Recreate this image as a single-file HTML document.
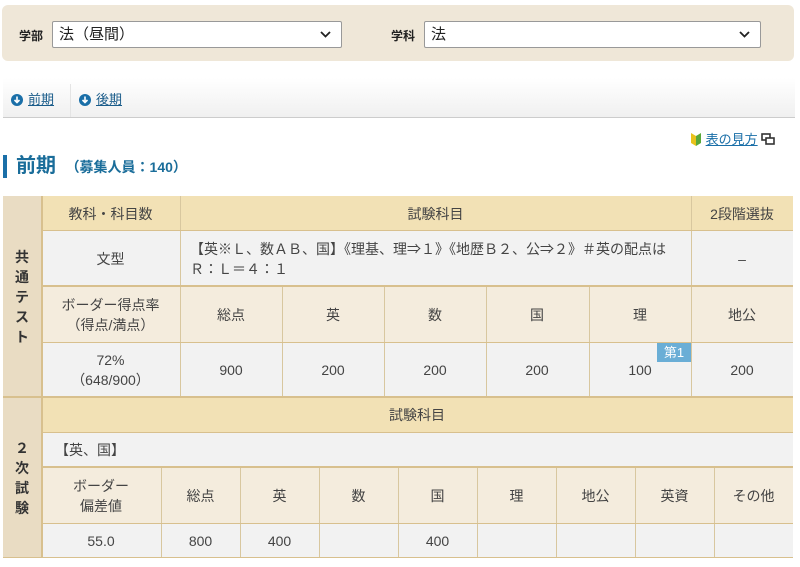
<!DOCTYPE html>
<html><head><meta charset="utf-8"><style>
body{margin:0;width:800px;height:567px;background:#fff;font-family:"Liberation Sans","Noto Sans CJK JP",sans-serif;color:#444;position:relative;overflow:hidden}
.a{position:absolute}
.c{position:absolute;display:flex;align-items:center;justify-content:center;text-align:center;font-size:14px;line-height:20px;box-sizing:border-box;color:#444}
.y{background:#f2e1b5}
.l{background:#f4ecdd}
.d{background:#f2f2f2}
.sel{position:absolute;background:#fff;border:1px solid #999;border-radius:2px;height:27px;box-sizing:border-box;font-size:15px;line-height:25px;padding-left:6px;color:#222}
.sel svg{position:absolute;right:10px;top:9px}
.lab{position:absolute;font-size:12px;font-weight:bold;color:#222}
.vl{position:absolute;width:1px;background:#d8c79f}
.hl{position:absolute;height:2px;background:#d8c08e}
.ic{display:inline-block;width:12px;height:12px;border-radius:50%;background:#1a6fa8;vertical-align:-2px;margin-right:5px;position:relative}
a{color:#1a5c8a}
</style></head><body>
<div class="a" style="left:2px;top:5px;width:792px;height:56px;background:#efe7d8;border-radius:6px"></div>
<div class="lab" style="left:19px;top:27px">学部</div>
<div class="sel" style="left:52px;top:21px;width:290px">法（昼間）<svg width="11" height="7" viewBox="0 0 11 7"><path d="M1 1l4.5 4.5L10 1" stroke="#222" stroke-width="1.8" fill="none"/></svg></div>
<div class="lab" style="left:391px;top:27px">学科</div>
<div class="sel" style="left:424px;top:21px;width:337px">法<svg width="11" height="7" viewBox="0 0 11 7"><path d="M1 1l4.5 4.5L10 1" stroke="#222" stroke-width="1.8" fill="none"/></svg></div>

<div class="a" style="left:3px;top:78px;width:792px;height:39px;background:linear-gradient(#fff,#f0f0f0);border-bottom:1px solid #ccc"></div>
<div class="a" style="left:70px;top:84px;width:1px;height:33px;background:#e4e4e4"></div>
<div class="a" style="left:11px;top:89px;font-size:13px"><span class="ic"><svg class="a" style="left:2px;top:2px" width="8" height="8" viewBox="0 0 8 8"><path d="M4 0.5v6M1.5 4L4 6.5 6.5 4" stroke="#fff" stroke-width="1.6" fill="none"/></svg></span><a style="text-decoration:underline">前期</a></div>
<div class="a" style="left:79px;top:89px;font-size:13px"><span class="ic"><svg class="a" style="left:2px;top:2px" width="8" height="8" viewBox="0 0 8 8"><path d="M4 0.5v6M1.5 4L4 6.5 6.5 4" stroke="#fff" stroke-width="1.6" fill="none"/></svg></span><a style="text-decoration:underline">後期</a></div>

<div class="a" style="left:690px;top:129px;font-size:13px"><svg width="12" height="16" viewBox="0 0 12 16" style="vertical-align:-3px"><path d="M1 2l5 3v10l-5-3z" fill="#e8c21c"/><path d="M6 5l5-3v10l-5 3z" fill="#5aa83a"/></svg> <a style="text-decoration:underline;color:#1a6fa8">表の見方</a> <svg width="14" height="12" viewBox="0 0 14 12" style="vertical-align:-1px"><rect x="1" y="1" width="8" height="6" fill="none" stroke="#333" stroke-width="1.6"/><rect x="5" y="5" width="8" height="6" fill="#fff" stroke="#333" stroke-width="1.6"/></svg></div>

<div class="a" style="left:3px;top:155px;width:4px;height:23px;background:#1a6fa8"></div>
<div class="a" style="left:16px;top:149px;font-size:20px;font-weight:bold;color:#1a6d9a">前期 <span style="font-size:14px;margin-left:4px">（募集人員：140）</span></div>

<!-- section 1 -->
<div class="c" style="left:3px;top:196px;width:38px;height:201px;background:#e9dcc3;font-weight:bold;line-height:20px;color:#333">共<br>通<br>テ<br>ス<br>ト</div>
<div class="c y" style="left:41px;top:196px;width:139px;height:35px">教科・科目数</div>
<div class="c y" style="left:180px;top:196px;width:511px;height:35px">試験科目</div>
<div class="c y" style="left:691px;top:196px;width:102px;height:35px">2段階選抜</div>
<div class="c d" style="left:41px;top:231px;width:139px;height:55px">文型</div>
<div class="c d" style="left:180px;top:231px;width:511px;height:55px;justify-content:flex-start;text-align:left;padding:0 4px 0 10px">【英※Ｌ、数ＡＢ、国】《理基、理⇒１》《地歴Ｂ２、公⇒２》＃英の配点は<br>Ｒ：Ｌ＝４：１</div>
<div class="c d" style="left:691px;top:231px;width:102px;height:55px">–</div>
<div class="c l" style="left:41px;top:286px;width:752px;height:57px"></div>
<div class="c l" style="left:41px;top:286px;width:139px;height:57px">ボーダー得点率<br>（得点/満点）</div>
<div class="c" style="left:180px;top:286px;width:102px;height:57px">総点</div>
<div class="c" style="left:282px;top:286px;width:102px;height:57px">英</div>
<div class="c" style="left:384px;top:286px;width:102px;height:57px">数</div>
<div class="c" style="left:486px;top:286px;width:102px;height:57px">国</div>
<div class="c" style="left:589px;top:286px;width:102px;height:57px">理</div>
<div class="c" style="left:691px;top:286px;width:102px;height:57px">地公</div>
<div class="c d" style="left:41px;top:343px;width:752px;height:54px"></div>
<div class="c" style="left:41px;top:343px;width:139px;height:54px">72%<br>（648/900）</div>
<div class="c" style="left:180px;top:343px;width:102px;height:54px">900</div>
<div class="c" style="left:282px;top:343px;width:102px;height:54px">200</div>
<div class="c" style="left:384px;top:343px;width:102px;height:54px">200</div>
<div class="c" style="left:486px;top:343px;width:102px;height:54px">200</div>
<div class="c" style="left:589px;top:343px;width:102px;height:54px">100</div>
<div class="c" style="left:691px;top:343px;width:102px;height:54px">200</div>
<div class="c" style="left:657px;top:343px;width:34px;height:19px;background:#6aaed6;color:#fff;font-size:13px">第1</div>
<div class="vl" style="left:180px;top:196px;height:201px"></div>
<div class="vl" style="left:691px;top:196px;height:201px"></div>
<div class="vl" style="left:282px;top:286px;height:111px"></div>
<div class="vl" style="left:384px;top:286px;height:111px"></div>
<div class="vl" style="left:486px;top:286px;height:111px"></div>
<div class="vl" style="left:589px;top:286px;height:111px"></div>
<div class="hl" style="left:41px;top:230px;width:752px;height:1px"></div>
<div class="hl" style="left:41px;top:285px;width:752px"></div>
<div class="hl" style="left:41px;top:342px;width:752px;height:1px"></div>

<!-- section 2 -->
<div class="hl" style="left:3px;top:396px;width:790px"></div>
<div class="c" style="left:3px;top:398px;width:38px;height:159px;background:#e9dcc3;font-weight:bold;line-height:20px;color:#333">２<br>次<br>試<br>験</div>
<div class="c y" style="left:41px;top:398px;width:752px;height:34px">試験科目</div>
<div class="c d" style="left:41px;top:432px;width:752px;height:35px;justify-content:flex-start;padding-left:14px">【英、国】</div>
<div class="c l" style="left:41px;top:467px;width:752px;height:57px"></div>
<div class="c" style="left:41px;top:467px;width:120px;height:57px">ボーダー<br>偏差値</div>
<div class="c" style="left:161px;top:467px;width:79px;height:57px">総点</div>
<div class="c" style="left:240px;top:467px;width:79px;height:57px">英</div>
<div class="c" style="left:319px;top:467px;width:79px;height:57px">数</div>
<div class="c" style="left:398px;top:467px;width:79px;height:57px">国</div>
<div class="c" style="left:477px;top:467px;width:79px;height:57px">理</div>
<div class="c" style="left:556px;top:467px;width:79px;height:57px">地公</div>
<div class="c" style="left:635px;top:467px;width:79px;height:57px">英資</div>
<div class="c" style="left:714px;top:467px;width:79px;height:57px">その他</div>
<div class="c d" style="left:41px;top:524px;width:752px;height:33px"></div>
<div class="c" style="left:41px;top:524px;width:120px;height:33px">55.0</div>
<div class="c" style="left:161px;top:524px;width:79px;height:33px">800</div>
<div class="c" style="left:240px;top:524px;width:79px;height:33px">400</div>
<div class="c" style="left:398px;top:524px;width:79px;height:33px">400</div>
<div class="vl" style="left:161px;top:467px;height:90px"></div>
<div class="vl" style="left:240px;top:467px;height:90px"></div>
<div class="vl" style="left:319px;top:467px;height:90px"></div>
<div class="vl" style="left:398px;top:467px;height:90px"></div>
<div class="vl" style="left:477px;top:467px;height:90px"></div>
<div class="vl" style="left:556px;top:467px;height:90px"></div>
<div class="vl" style="left:635px;top:467px;height:90px"></div>
<div class="vl" style="left:714px;top:467px;height:90px"></div>
<div class="hl" style="left:41px;top:432px;width:752px;height:1px"></div>
<div class="hl" style="left:41px;top:466px;width:752px"></div>
<div class="hl" style="left:41px;top:523px;width:752px;height:1px"></div>
<div class="hl" style="left:3px;top:557px;width:790px;height:1px"></div>
<div class="vl" style="left:41px;top:196px;height:361px;width:2px;background:#d8c08e"></div>
</body></html>
